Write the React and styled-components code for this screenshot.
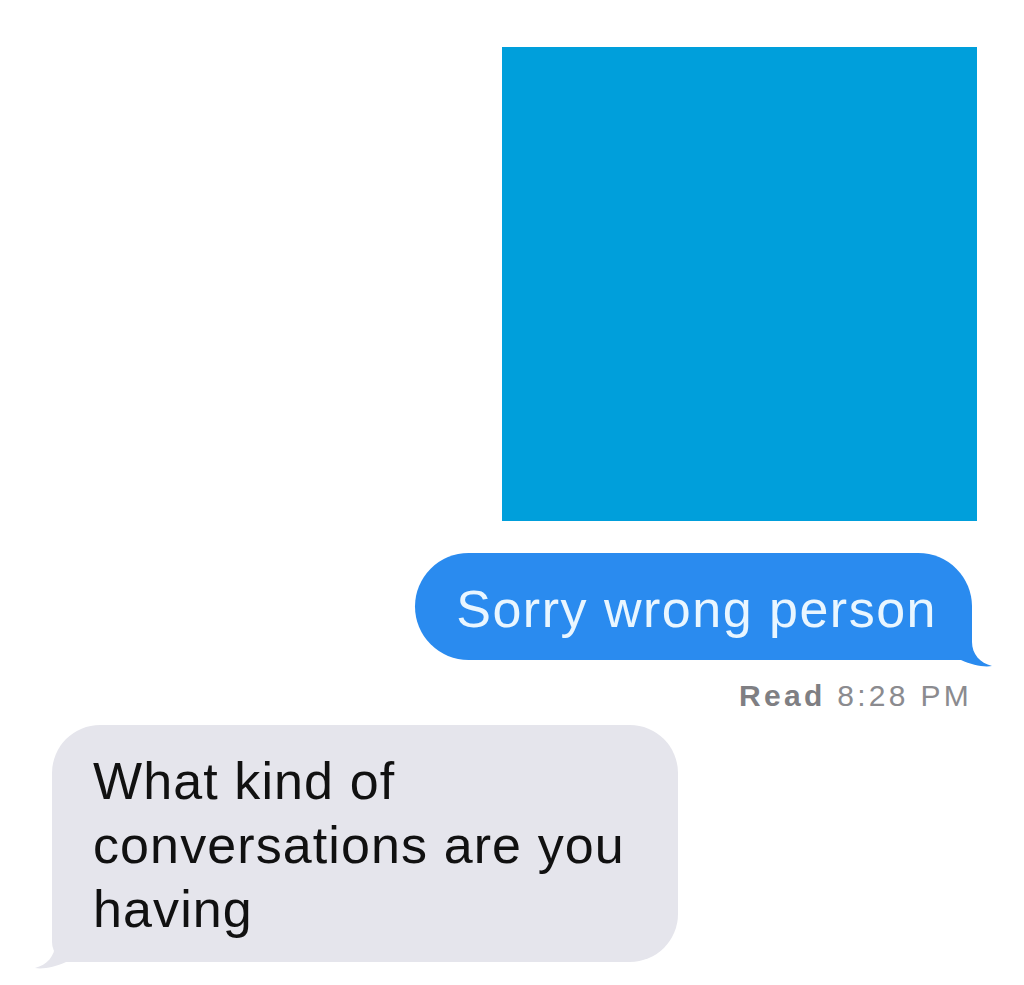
import React from 'react'
import styled, { createGlobalStyle } from 'styled-components'

const GlobalStyle = createGlobalStyle`
  html, body {
    margin: 0;
    padding: 0;
    background: #ffffff;
  }
  body {
    font-family: "Liberation Sans", Arial, sans-serif;
  }
`

const BLUE = '#2a8bef'
const GRAY = '#e5e5ec'

// 말풍선 꼬리
const Tail = ({ color, side }) => (
  <StTail viewBox="0 0 52 57" side={side}>
    <path
      d="M0 0 H30 V32 C30 44 38 53 50 56 C42 57.5 30 55 19 50 L0 50 Z"
      fill={color}
    />
  </StTail>
)

const App = () => {
  return (
    <>
      <GlobalStyle />
      <StPage>
        <StPhoto />

        <StOutgoing>
          Sorry wrong person
          <Tail color={BLUE} side="right" />
        </StOutgoing>

        <StReceipt>
          <b>Read</b> 8:28 PM
        </StReceipt>

        <StIncoming>
          What kind of conversations are you having
          <Tail color={GRAY} side="left" />
        </StIncoming>
      </StPage>
    </>
  )
}

const StPage = styled.div`
  display: flex;
  flex-direction: column;
  width: 1024px;
  height: 985px;
  padding-top: 47px;
  box-sizing: border-box;
  overflow: hidden;
`

const StPhoto = styled.div`
  align-self: flex-end;
  width: 475px;
  height: 474px;
  margin-right: 47px;
  background-color: #009fdb;
`

const StBubble = styled.div`
  position: relative;
  box-sizing: border-box;
  font-size: 52px;
`

const StOutgoing = styled(StBubble)`
  align-self: flex-end;
  margin: 32px 52px 0 0;
  padding: 26px 35px 21px 41px;
  line-height: 60px;
  letter-spacing: 1.5px;
  border-radius: 54px 54px 20px 54px;
  background-color: ${BLUE};
  color: #e9f6ff;
  white-space: nowrap;
`

const StIncoming = styled(StBubble)`
  align-self: flex-start;
  width: 626px;
  margin: 11px 0 0 52px;
  padding: 24px 25px 21px 41px;
  line-height: 64px;
  letter-spacing: 1.1px;
  border-radius: 48px 48px 48px 20px;
  background-color: ${GRAY};
  color: #111111;
`

const StTail = styled.svg`
  position: absolute;
  bottom: -7px;
  width: 52px;
  height: 57px;
  ${({ side }) =>
    side === 'right'
      ? 'right: -22px;'
      : 'left: -19px; transform: scaleX(-1);'}
`

const StReceipt = styled.div`
  align-self: flex-end;
  margin: 18px 52px 0 0;
  font-size: 30px;
  line-height: 36px;
  letter-spacing: 3.3px;
  color: #8b8b8f;

  b {
    font-weight: 700;
    color: #7f7f83;
  }
`

export default App
